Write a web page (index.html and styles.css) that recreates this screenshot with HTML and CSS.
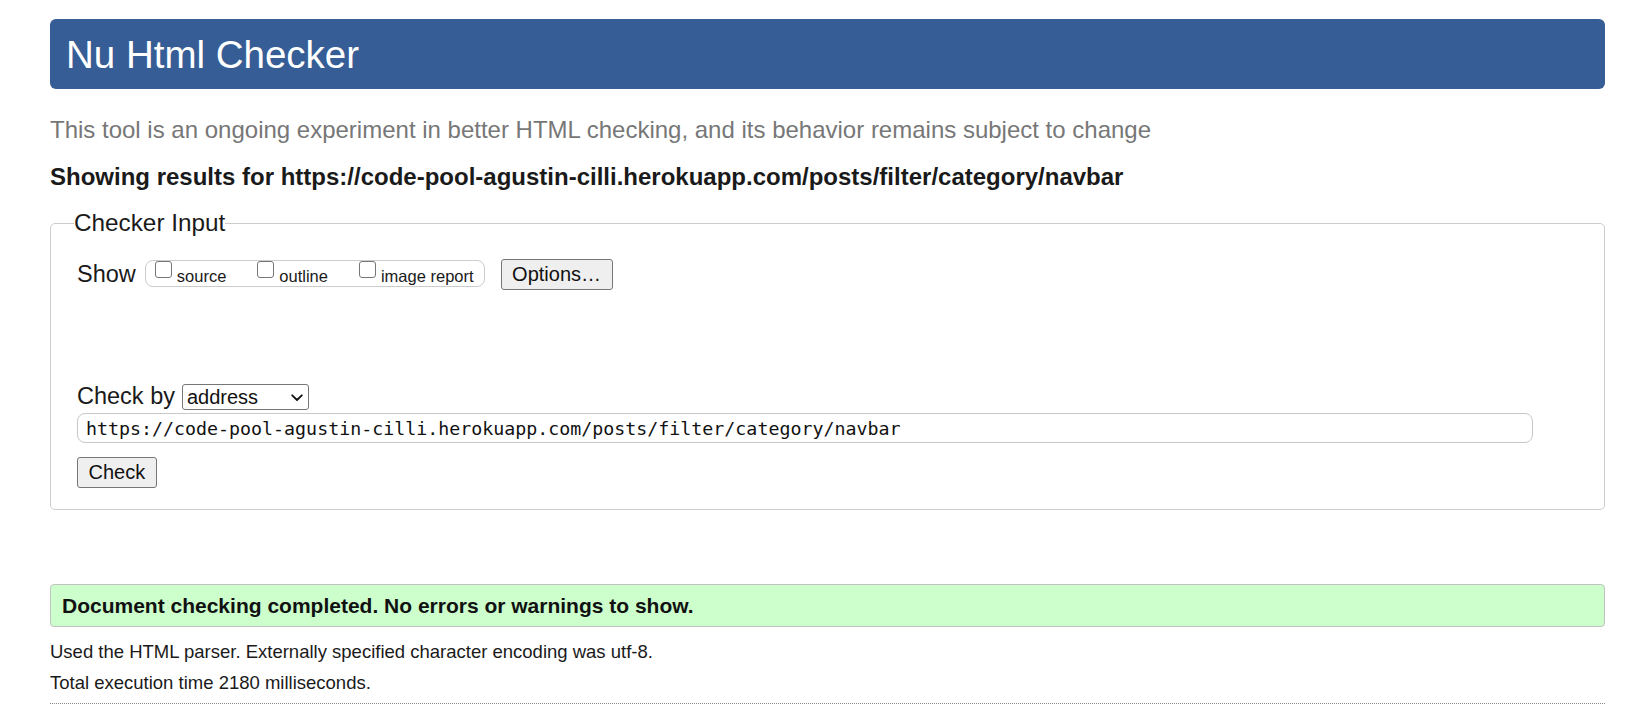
FILE: index.html
```html
<!DOCTYPE html>
<html lang="en">
<head>
<meta charset="utf-8">
<title>Nu Html Checker</title>
<link rel="stylesheet" href="styles.css">
</head>
<body>
<div class="page">
  <h1 class="title">Nu Html Checker</h1>
  <p class="about">This tool is an ongoing experiment in better HTML checking, and its behavior remains subject to change</p>
  <p class="showing">Showing results for https://code-pool-agustin-cilli.herokuapp.com/posts/filter/category/navbar</p>
  <fieldset class="checker">
    <legend class="checker-legend">Checker Input</legend>
    <div class="show-row">
      <span class="row-label show-label">Show</span>
      <div class="show-group">
        <label class="opt"><input type="checkbox" class="cb"><span class="opt-text">source</span></label>
        <label class="opt"><input type="checkbox" class="cb"><span class="opt-text">outline</span></label>
        <label class="opt"><input type="checkbox" class="cb"><span class="opt-text">image report</span></label>
      </div>
      <button class="btn options-btn" type="button">Options…</button>
    </div>
    <div class="checkby-row">
      <span class="row-label checkby-label">Check by</span>
      <span class="select-wrap">
        <select class="select"><option>address</option></select>
        <svg class="chevron" width="12" height="8" viewBox="0 0 12 8"><polyline points="1.2,1.3 6,6 10.8,1.3" fill="none" stroke="#111" stroke-width="1.8" stroke-linecap="round" stroke-linejoin="round"/></svg>
      </span>
    </div>
    <input class="url" type="text" value="https://code-pool-agustin-cilli.herokuapp.com/posts/filter/category/navbar">
    <button class="btn check-btn" type="button">Check</button>
  </fieldset>
  <div class="success">Document checking completed. No errors or warnings to show.</div>
  <p class="details details-first">Used the HTML parser. Externally specified character encoding was utf-8.</p>
  <p class="details">Total execution time 2180 milliseconds.</p>
  <hr class="rule">
</div>
</body>
</html>
```

FILE: styles.css
```css
html, body {
  margin: 0;
  padding: 0;
  background: #fff;
}

body {
  font-family: "Liberation Sans", Arial, sans-serif;
  color: #1a1a1a;
}

.page {
  padding: 19px 26px 0 50px;
}

.title {
  margin: 0;
  height: 70px;
  box-sizing: border-box;
  padding: 3px 16px 1px;
  line-height: 66px;
  font-size: 38.5px;
  font-weight: normal;
  color: #fff;
  background: #365d95;
  border-radius: 6px;
}

.about {
  margin: 27px 0 0;
  font-size: 24px;
  line-height: 28px;
  color: #777;
}

.showing {
  margin: 19px 0 0;
  font-size: 24px;
  line-height: 28px;
  font-weight: bold;
  color: #1a1a1a;
}

.checker {
  margin: 18px 0 0;
  padding: 0 26px 21px;
  border: 1px solid #ccc;
  border-radius: 5px;
  min-inline-size: 0;
}

.checker-legend {
  margin-left: -3px;
  padding: 0;
  font-size: 24.3px;
  line-height: 28px;
  color: #1a1a1a;
}

.show-row {
  display: flex;
  align-items: flex-start;
  margin-top: 22px;
}

.row-label {
  font-size: 23.5px;
  line-height: 28px;
  color: #1a1a1a;
}

.show-label {
  margin-top: 1px;
}

.show-group {
  display: flex;
  align-items: flex-start;
  margin: 1px 0 0 9px;
  height: 27px;
  box-sizing: border-box;
  padding: 0 10px 0 9px;
  border: 1px solid #ccc;
  border-radius: 8px;
}

.opt {
  display: flex;
  align-items: flex-start;
}

.opt + .opt {
  margin-left: 31px;
}

.cb {
  -webkit-appearance: none;
  appearance: none;
  width: 17px;
  height: 17px;
  margin: 0 5px 0 0;
  box-sizing: border-box;
  border: 1.3px solid #767676;
  border-radius: 3px;
  background: #fff;
}

.opt-text {
  padding-top: 5px;
  font-size: 16.5px;
  line-height: 20px;
  color: #1a1a1a;
}

.btn {
  font-family: "Liberation Sans", Arial, sans-serif;
  font-size: 20px;
  color: #111;
  background: #efefef;
  border: 1px solid #767676;
  border-radius: 3px;
  padding: 0 10.5px;
  height: 31px;
  line-height: 29px;
  margin: 0;
}

.options-btn {
  margin-left: 16px;
}

.checkby-row {
  display: flex;
  align-items: flex-start;
  margin-top: 94px;
}

.checkby-label {
  margin-top: -2px;
}

.select-wrap {
  position: relative;
  display: inline-block;
  margin-left: 7px;
}

.select {
  -webkit-appearance: none;
  appearance: none;
  display: block;
  width: 127px;
  height: 26px;
  box-sizing: border-box;
  margin: 0;
  padding: 0 0 0 4px;
  font-family: "Liberation Sans", Arial, sans-serif;
  font-size: 20px;
  line-height: 24px;
  color: #111;
  background: #fff;
  border: 1px solid #767676;
  border-radius: 3px;
}

.chevron {
  position: absolute;
  left: 109px;
  top: 10px;
  pointer-events: none;
}

.url {
  display: block;
  width: 97%;
  height: 30px;
  box-sizing: border-box;
  margin: 3px 0 0;
  padding: 0 8px;
  font-family: "DejaVu Sans Mono", "Liberation Mono", monospace;
  font-size: 18.3px;
  color: #111;
  background: #fff;
  border: 1px solid #c8c8c8;
  border-radius: 8px;
}

.check-btn {
  display: block;
  margin-top: 14px;
}

.success {
  margin-top: 74px;
  height: 43px;
  box-sizing: border-box;
  padding: 1px 11px 0;
  line-height: 40px;
  font-size: 21px;
  font-weight: bold;
  color: #111;
  background: #ccffcc;
  border: 1px solid #c2c2c2;
  border-radius: 4px;
}

.details {
  margin: 0;
  font-size: 18.5px;
  line-height: 31px;
  color: #1a1a1a;
}

.details-first {
  margin-top: 9px;
}

.rule {
  margin: 5px 0 0;
  height: 0;
  border: 0;
  border-top: 1px dotted #888;
}
```
